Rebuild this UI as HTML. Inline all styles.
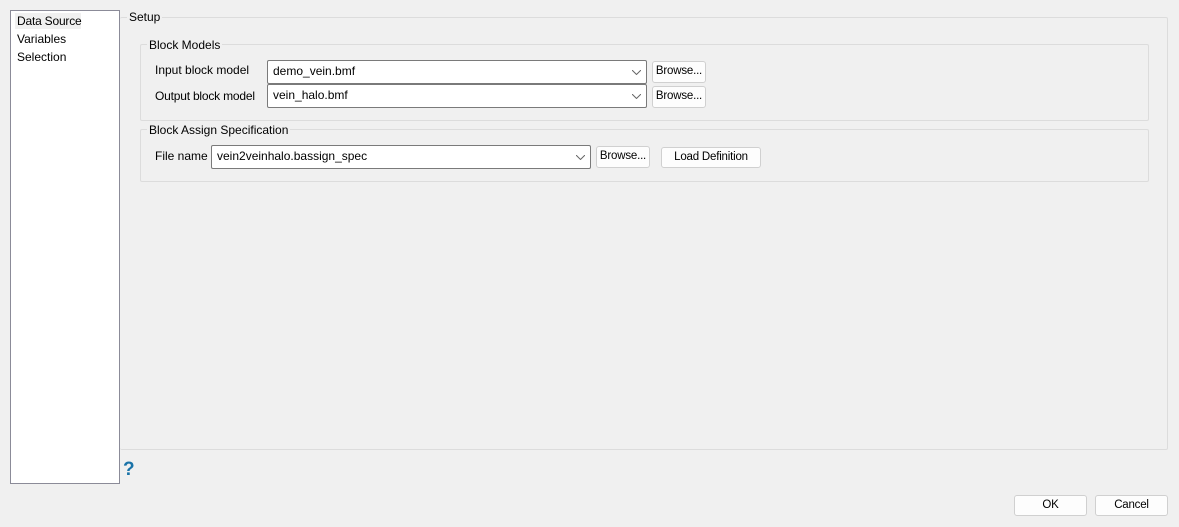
<!DOCTYPE html>
<html><head><style>
body{margin:0;width:1179px;height:527px;background:#f0f0f0;font-family:"Liberation Sans",sans-serif;font-size:12px;color:#000;position:relative;overflow:hidden}
.a{position:absolute}
.list{left:10px;top:10px;width:108px;height:472px;background:#fff;border:1px solid #8b8b98}
.grp{border:1px solid #dcdcdc;border-radius:2px}
.t{background:#f0f0f0;padding:0 2px;line-height:14px}
.cb{background:#fff;border:1px solid #7a7a7a;border-radius:2px;box-sizing:border-box;height:24px;line-height:21px;padding-left:5px}
.cb svg{position:absolute;right:5px;top:9px}
.btn{background:#fdfdfd;border:1px solid #d0d0d0;border-radius:3px;box-sizing:border-box;text-align:center;line-height:19px;font-size:11.5px;letter-spacing:-0.2px}
</style></head><body>
<div class="a list"></div>
<div class="a" style="left:15px;top:13px;width:66px;height:16px;background:#f0f0f0"></div>
<div class="a" style="left:17px;top:14px;letter-spacing:-0.2px">Data Source</div>
<div class="a" style="left:17px;top:32px">Variables</div>
<div class="a" style="left:17px;top:50px">Selection</div>

<div class="a grp" style="left:120px;top:17px;width:1047px;height:431px;border-left:none"></div>
<div class="a t" style="left:127px;top:10px">Setup</div>

<div class="a grp" style="left:140px;top:44px;width:1007px;height:75px"></div>
<div class="a t" style="left:147px;top:38px">Block Models</div>
<div class="a" style="left:155px;top:63px">Input block model</div>
<div class="a cb" style="left:267px;top:60px;width:380px">demo_vein.bmf<svg width="9" height="5"><path d="M0 0L4.5 4.5L9 0" fill="none" stroke="#666"/></svg></div>
<div class="a btn" style="left:652px;top:61px;width:54px;height:22px">Browse...</div>
<div class="a" style="left:155px;top:89px;letter-spacing:-0.2px">Output block model</div>
<div class="a cb" style="left:267px;top:84px;width:380px">vein_halo.bmf<svg width="9" height="5"><path d="M0 0L4.5 4.5L9 0" fill="none" stroke="#666"/></svg></div>
<div class="a btn" style="left:652px;top:86px;width:54px;height:22px">Browse...</div>

<div class="a grp" style="left:140px;top:129px;width:1007px;height:51px"></div>
<div class="a t" style="left:147px;top:123px">Block Assign Specification</div>
<div class="a" style="left:155px;top:149px">File name</div>
<div class="a cb" style="left:211px;top:145px;width:380px">vein2veinhalo.bassign_spec<svg width="9" height="5"><path d="M0 0L4.5 4.5L9 0" fill="none" stroke="#666"/></svg></div>
<div class="a btn" style="left:596px;top:146px;width:54px;height:22px">Browse...</div>
<div class="a btn" style="left:661px;top:147px;width:100px;height:21px">Load Definition</div>

<div class="a" style="left:123px;top:460px;color:#1a73a8;font-weight:bold;font-size:19px;line-height:20px">?</div>
<div class="a btn" style="left:1014px;top:495px;width:73px;height:21px">OK</div>
<div class="a btn" style="left:1095px;top:495px;width:73px;height:21px">Cancel</div>
</body></html>
